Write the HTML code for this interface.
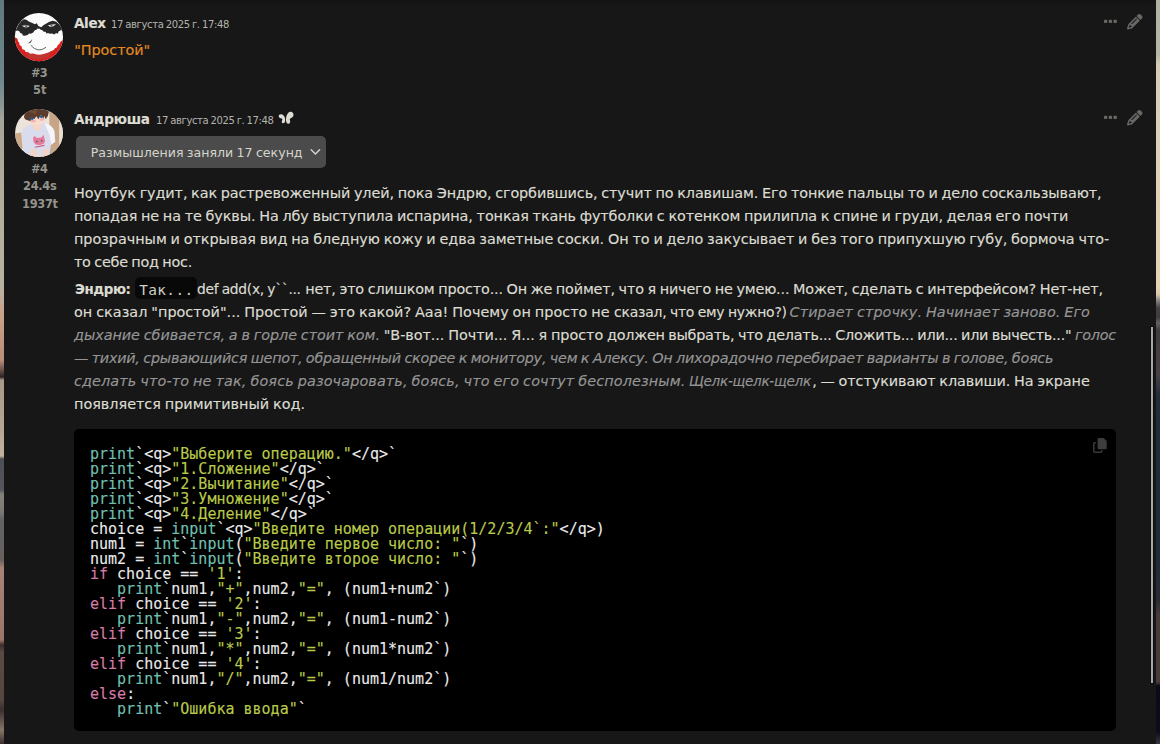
<!DOCTYPE html>
<html lang="ru">
<head>
<meta charset="utf-8">
<title>Chat</title>
<style>
html,body{margin:0;padding:0;}
body{width:1160px;height:744px;overflow:hidden;position:relative;background:#171717;font-family:"DejaVu Sans","Liberation Sans",sans-serif;color:#dcdcd2;}
#bgl{position:absolute;left:0;top:0;width:4px;height:744px;background:linear-gradient(#5f797e 0px,#6f888b 80px,#8a9794 105px,#a5a598 120px,#b0ac9c 186px,#b8b2a2 290px,#c9a48c 310px,#b98e7a 360px,#5a4640 372px,#2a2422 377px,#a89a88 380px,#b5a794 430px,#c0b29e 456px,#4c4e56 459px,#55565c 490px,#85807a 494px,#7c7873 512px,#626266 520px,#66605c 560px,#a88376 568px,#9a7568 640px,#3a2c28 645px,#5a4a44 652px,#55463f 700px,#3a3030 710px,#857565 730px,#3a3030 744px);}
#bgr{position:absolute;left:1156px;top:0;width:4px;height:744px;background:linear-gradient(#aeb3a6 0px,#b4b7a8 55px,#d6cbb5 65px,#dccfb8 120px,#e6d3b5 288px,#d8c4a8 295px,#8c8684 300px,#454044 308px,#3f3a3e 317px,#666164 323px,#413c41 330px,#4a4046 375px,#222c3a 395px,#1f2a3a 555px,#2a2c35 600px,#4a3a3a 615px,#4a3a3a 682px,#0a0a18 686px,#0c0c1c 732px,#3a3540 744px);}
#panel{position:absolute;left:4px;top:0;width:1152px;height:744px;background:#171717;}
#topshade{position:absolute;left:4px;top:0;width:1152px;height:7px;background:linear-gradient(#131313,#171717);}
#sb{position:absolute;left:1151px;top:327px;width:2px;height:356px;background:#a9a9a9;box-shadow:0 0 0 1px #0c0c0c;}
.t{position:absolute;white-space:pre;word-spacing:-0.7px;line-height:23px;font-size:14.4px;height:23px;-webkit-text-stroke:0.15px;}
.t i{color:#959595;font-style:italic;}
.nm{font-weight:bold;font-size:14.6px;}
.b{font-weight:bold;font-size:14.4px;}
.ts{font-size:10.8px;color:#b4b4ae;-webkit-text-stroke:0;}
.q{color:#e18a24;}
.sx{font-weight:bold;font-size:12.7px;color:#94948c;-webkit-text-stroke:0;}
.rs{color:#d4d4cc;font-size:12.6px;-webkit-text-stroke:0;}
#rbox{position:absolute;left:76px;top:136px;width:250px;height:32px;border-radius:5px;background:#4b4b4b;}
#icode{position:absolute;left:135.2px;top:277.2px;width:61.4px;height:21.4px;border-radius:5px;background:#080808;}
#icodet{position:absolute;left:139.3px;top:279px;font-family:"DejaVu Sans Mono","Liberation Mono",monospace;font-size:14.4px;letter-spacing:0.36px;line-height:23px;white-space:nowrap;color:#cfcfc6;}
#cb{position:absolute;left:74px;top:429px;width:1042px;height:302px;border-radius:5px;background:#000;}
#cb pre{position:absolute;left:16px;top:18px;-webkit-text-stroke:0.12px;margin:0;font-family:"DejaVu Sans Mono","Liberation Mono",monospace;font-size:15px;line-height:15px;color:#eaeaea;white-space:pre;}
.k{color:#d77ba8;}
.bi{color:#70c0b1;}
.s{color:#b9ca4a;}
svg{position:absolute;overflow:visible;}
</style>
</head>
<body>
<div id="bgl"></div><div id="bgr"></div>
<div id="panel"></div><div id="topshade"></div><div id="sb"></div>
<div id="rbox"></div>
<div id="icode"></div><div id="icodet">Так...</div>
<!-- avatar 1 -->
<svg style="left:9px;top:6px" width="60" height="60" viewBox="0 0 744 744">
<defs><clipPath id="c1"><circle cx="371" cy="385" r="299"/></clipPath></defs>
<circle cx="371" cy="385" r="303" fill="#0e0e0e"/>
<g clip-path="url(#c1)">
<rect x="60" y="70" width="640" height="640" fill="#fbfbfb"/>
<path d="M60 385 L78 392 L105 405 L112 440 L128 455 L130 485 L155 500 L165 535 L195 545 L205 570 L240 575 L260 592 L300 590 L340 600 L380 605 L420 598 L450 590 L490 578 L520 560 L555 545 L570 525 L595 510 L605 485 L625 470 L635 445 L655 430 L700 405 L700 720 L60 720Z" fill="#d8201f"/>
<path d="M200 585 L280 598 L370 612 L450 598 L540 555 L480 640 L360 665 L250 640Z" fill="#b5403a" opacity=".75"/>
<path d="M60 300 L92 285 L120 225 L150 190 L185 165 L215 172 L250 195 L290 210 L320 225 L345 215 L365 250 L345 290 L320 300 L300 330 L270 345 L250 340 L230 360 L195 370 L170 365 L165 345 L140 335 L125 310 L100 305 L60 320Z" fill="#272727"/>
<path d="M355 245 L400 262 L430 235 L470 215 L500 195 L545 182 L585 195 L620 225 L650 265 L700 290 L700 305 L640 300 L615 315 L605 345 L585 335 L560 352 L535 340 L510 345 L480 335 L465 345 L455 320 L430 318 L415 300 L395 295 L375 280 L350 285Z" fill="#272727"/>
<path d="M158 240 Q205 226 262 242 Q240 268 205 267 Q175 262 158 240Z" fill="#e4e4e4"/>
<path d="M480 240 Q520 220 585 224 Q560 256 520 260 Q495 256 480 240Z" fill="#e4e4e4"/>
<path d="M165 238 Q210 226 258 240" stroke="#272727" stroke-width="12" fill="none"/>
<path d="M485 234 Q530 216 580 221" stroke="#272727" stroke-width="12" fill="none"/>
<circle cx="212" cy="250" r="12" fill="#555"/><circle cx="528" cy="243" r="12" fill="#555"/>
<path d="M288 410 L264 440 L230 464 L272 452 Z" fill="#333"/>
<path d="M272 490 Q360 590 455 515" stroke="#2b2b2b" stroke-width="9" fill="none" stroke-linecap="round"/>
</g>
</svg>
<!-- avatar 2 -->
<svg style="left:9px;top:103px" width="60" height="60" viewBox="0 0 744 744">
<defs><clipPath id="c2"><circle cx="372" cy="372" r="297"/></clipPath></defs>
<circle cx="372" cy="372" r="302" fill="#0e0e0e"/>
<g clip-path="url(#c2)">
<rect x="60" y="60" width="640" height="640" fill="#ece3da"/>
<rect x="500" y="60" width="125" height="640" fill="#c8a685"/>
<rect x="625" y="60" width="80" height="640" fill="#e9ded2"/>
<path d="M60 380 L150 365 L170 560 L120 600 L60 560Z" fill="#c9a98a"/>
<path d="M160 340 Q200 280 300 260 L440 245 Q540 270 565 360 L575 480 L520 520 L500 640 L430 660 L240 670 L180 600 L165 480Z" fill="#d9dcec"/>
<path d="M440 250 Q520 262 560 340 L570 480 L525 515 L505 400Z" fill="#f4f4fa"/>
<path d="M250 600 L330 560 L360 680 L270 680Z" fill="#f3d3c6"/>
<path d="M420 560 L485 580 L470 670 L400 680Z" fill="#f3d3c6"/>
<path d="M255 170 Q250 260 330 290 Q420 290 440 200 L440 140 L260 140Z" fill="#f7dcd0"/>
<path d="M290 270 L400 270 L395 330 L340 345 L300 320Z" fill="#f4d6ca"/>
<ellipse cx="300" cy="225" rx="34" ry="16" fill="#f0a8a8" opacity=".8"/>
<ellipse cx="408" cy="205" rx="30" ry="15" fill="#f0a8a8" opacity=".8"/>
<path d="M185 175 Q190 95 290 75 Q400 50 495 105 Q490 160 455 200 L440 160 L425 195 L395 148 L365 200 L340 165 L312 202 L282 186 L262 226 L235 215 Q200 215 185 175Z" fill="#5b3b2b"/><path d="M240 110 Q300 85 350 100 L330 140 Z" fill="#7a5440" opacity=".7"/>
<ellipse cx="286" cy="196" rx="19" ry="17" fill="#2f7fd0"/><ellipse cx="400" cy="172" rx="19" ry="17" fill="#2f7fd0"/><ellipse cx="286" cy="190" rx="14" ry="8" fill="#1c3f78"/><ellipse cx="400" cy="166" rx="14" ry="8" fill="#1c3f78"/>
<path d="M300 425 L322 410 L345 435 L400 428 L430 395 L440 440 Q455 480 430 505 Q380 530 330 515 Q295 490 300 425Z" fill="#e8799c"/>
<circle cx="345" cy="478" r="11" fill="#3a6a78"/><circle cx="405" cy="466" r="11" fill="#3a6a78"/>
<path d="M320 548 L440 525" stroke="#d0607f" stroke-width="14"/>
</g>
</svg>
<!-- icons row 1 -->
<svg style="left:1103px;top:19px" width="15" height="5" viewBox="0 0 15 5"><rect x="0.900" y="0.700" width="3.400" height="3.400" rx="1.100" fill="#686864"/><rect x="5.700" y="0.700" width="3.400" height="3.400" rx="1.100" fill="#686864"/><rect x="10.500" y="0.700" width="3.400" height="3.400" rx="1.100" fill="#686864"/></svg>
<svg style="left:1126.700px;top:13.800px" width="15.500" height="15.500" viewBox="0 0 512 512"><path fill="#686864" d="M410.300 231l11.300-11.300-33.900-33.900-62.100-62.100L291.700 89.800l-11.300 11.300-22.600 22.600L58.600 322.900c-10.400 10.400-18 23.300-22.200 37.400L1 480.700c-2.500 8.400-.2 17.500 6.100 23.700s15.300 8.500 23.700 6.100l120.300-35.400c14.100-4.200 27-11.800 37.400-22.200L387.700 253.700 410.300 231zM160 399.400l-9.100 22.700c-4 3.100-8.500 5.400-13.300 6.900L59.400 452l23-78.100c1.400-4.900 3.800-9.400 6.900-13.300l22.700-9.100v32c0 8.800 7.200 16 16 16h32zM362.700 18.700L348.300 33.200 325.700 55.800 314.300 67.100l33.900 33.900 62.100 62.100 33.900 33.900 11.300-11.300 22.600-22.600 14.500-14.500c25-25 25-65.500 0-90.500L453.300 18.700c-25-25-65.500-25-90.500 0zm-47.400 168l-144 144c-6.200 6.200-16.400 6.200-22.600 0s-6.200-16.400 0-22.600l144-144c6.200-6.200 16.400-6.200 22.600 0s6.200 16.400 0 22.600z"/></svg>
<!-- icons row 2 -->
<svg style="left:1103px;top:115px" width="15" height="5" viewBox="0 0 15 5"><rect x="0.900" y="0.700" width="3.400" height="3.400" rx="1.100" fill="#686864"/><rect x="5.700" y="0.700" width="3.400" height="3.400" rx="1.100" fill="#686864"/><rect x="10.500" y="0.700" width="3.400" height="3.400" rx="1.100" fill="#686864"/></svg>
<svg style="left:1126.700px;top:109.800px" width="15.500" height="15.500" viewBox="0 0 512 512"><path fill="#686864" d="M410.300 231l11.300-11.300-33.900-33.900-62.100-62.100L291.700 89.800l-11.300 11.300-22.600 22.600L58.600 322.900c-10.400 10.400-18 23.300-22.200 37.400L1 480.700c-2.500 8.400-.2 17.500 6.100 23.700s15.300 8.500 23.700 6.100l120.300-35.400c14.100-4.200 27-11.800 37.400-22.200L387.700 253.700 410.300 231zM160 399.400l-9.100 22.700c-4 3.100-8.500 5.400-13.300 6.900L59.400 452l23-78.100c1.400-4.900 3.800-9.400 6.900-13.300l22.700-9.100v32c0 8.800 7.200 16 16 16h32zM362.700 18.700L348.300 33.200 325.700 55.800 314.300 67.100l33.900 33.900 62.100 62.100 33.900 33.900 11.300-11.300 22.600-22.600 14.500-14.500c25-25 25-65.500 0-90.500L453.300 18.700c-25-25-65.500-25-90.500 0zm-47.400 168l-144 144c-6.200 6.200-16.400 6.200-22.600 0s-6.200-16.400 0-22.600l144-144c6.200-6.200 16.400-6.200 22.600 0s6.200 16.400 0 22.600z"/></svg>
<!-- butterfly -->
<svg style="left:270px;top:105px" width="60" height="30" viewBox="0 0 1160 580"><path fill="#dcdcd2" d="M168 215 C168 185 200 170 237 184 C277 200 294 250 294 290 C294 332 276 357 250 354 C226 351 220 325 234 300 C246 276 236 262 210 258 C184 254 168 240 168 215Z"/><path fill="#dcdcd2" d="M311 310 C304 250 317 190 350 153 C380 122 432 126 450 165 C464 200 446 242 410 253 C385 261 375 276 386 300 C397 330 386 360 355 362 C327 362 314 340 311 310Z"/></svg>
<!-- chevron -->
<svg style="left:310px;top:148px" width="11" height="8" viewBox="0 0 11 8"><path d="M1.200 1.800 L5.400 6 L9.600 1.800" fill="none" stroke="#d4d4cc" stroke-width="1.500" stroke-linecap="round" stroke-linejoin="round"/></svg>

<div class="t sx" id="s1a" style="left:31.2px;top:60.6px;letter-spacing:-0.790px;transform:scaleX(0.9);transform-origin:0 50%">#3</div>
<div class="t sx" id="s1b" style="left:32.7px;top:78.1px;letter-spacing:-0.009px;transform:scaleX(0.9);transform-origin:0 50%">5t</div>
<div class="t sx" id="s2a" style="left:31px;top:156.7px;letter-spacing:-0.512px;transform:scaleX(0.9);transform-origin:0 50%">#4</div>
<div class="t sx" id="s2b" style="left:22.6px;top:174.2px;letter-spacing:-0.327px;transform:scaleX(0.9);transform-origin:0 50%">24.4s</div>
<div class="t sx" id="s2c" style="left:21.8px;top:192px;letter-spacing:-0.323px;transform:scaleX(0.9);transform-origin:0 50%">1937t</div>
<div class="t nm" id="m1name" style="left:74.2px;top:10.5px;letter-spacing:-0.408px;transform:scaleX(0.93);transform-origin:0 50%">Alex</div>
<div class="t ts" id="m1ts" style="left:110.9px;top:12.8px;letter-spacing:-0.390px;transform:scaleX(0.93);transform-origin:0 50%">17 августа 2025 г. 17:48</div>
<div class="t q" id="m1tx" style="left:74.3px;top:38.5px;letter-spacing:-0.084px">"Простой"</div>
<div class="t nm" id="m2name" style="left:74px;top:106.5px;letter-spacing:-0.236px;transform:scaleX(0.93);transform-origin:0 50%">Андрюша</div>
<div class="t ts" id="m2ts" style="left:155.7px;top:108.8px;letter-spacing:-0.408px;transform:scaleX(0.93);transform-origin:0 50%">17 августа 2025 г. 17:48</div>
<div class="t rs" id="rs" style="left:90.7px;top:140.5px;letter-spacing:0.002px">Размышления заняли 17 секунд</div>
<div class="t " id="p1a" style="left:74px;top:181.5px;letter-spacing:-0.105px">Ноутбук гудит, как растревоженный улей, пока Эндрю, сгорбившись, стучит по клавишам. Его тонкие пальцы то и дело соскальзывают,</div>
<div class="t " id="p1b" style="left:74px;top:204.5px;letter-spacing:-0.094px">попадая не на те буквы. На лбу выступила испарина, тонкая ткань футболки с котенком прилипла к спине и груди, делая его почти</div>
<div class="t " id="p1c" style="left:74px;top:227.5px;letter-spacing:-0.034px">прозрачным и открывая вид на бледную кожу и едва заметные соски. Он то и дело закусывает и без того припухшую губу, бормоча что-</div>
<div class="t " id="p1d" style="left:74px;top:250.5px;letter-spacing:-0.261px">то себе под нос.</div>
<div class="t b" id="p2n" style="left:74.5px;top:277.5px;letter-spacing:-0.400px;transform:scaleX(0.93);transform-origin:0 50%">Эндрю:</div>
<div class="t " id="p2a" style="left:197.1px;top:277.5px;letter-spacing:-0.307px;transform:scaleX(0.96);transform-origin:0 50%">def add(x, y``...</div>
<div class="t " id="p2a2" style="left:305.2px;top:277.5px;letter-spacing:-0.170px">нет, это слишком просто... Он же поймет, что я ничего не умею... Может, сделать с интерфейсом? Нет-нет,</div>
<div class="t " id="p2b" style="left:74px;top:300.5px;letter-spacing:0.025px">он сказал "простой"... Простой — это какой? Ааа! Почему он просто не </div>
<div class="t " id="p2b1" style="left:613.5px;top:300.5px;letter-spacing:-0.236px;transform:scaleX(0.97);transform-origin:0 50%">сказал, что ему нужно?)</div>
<div class="t " id="p2b2" style="left:789.6px;top:300.5px;letter-spacing:0.066px"><i>Стирает строчку. Начинает заново. Его</i></div>
<div class="t " id="p2c" style="left:74px;top:323.5px;letter-spacing:-0.051px"><i>дыхание сбивается, а в горле стоит ком.</i> "В-вот... Почти... Я... я просто </div>
<div class="t " id="p2c1" style="left:607px;top:323.5px;letter-spacing:-0.253px">должен выбрать, что делать... Сложить... или... или вычесть..." <i>голос</i></div>
<div class="t " id="p2d" style="left:74px;top:346.5px;letter-spacing:-0.264px"><i>— тихий, срывающийся шепот, обращенный скорее к монитору, чем к Алексу. Он лихорадочно перебирает варианты в голове, боясь</i></div>
<div class="t " id="p2e" style="left:74px;top:369.5px;letter-spacing:0.112px"><i>сделать что-то не так, боясь разочаровать, боясь, что его сочтут бесполезным. </i></div>
<div class="t " id="p2e1" style="left:689.4px;top:369.5px;letter-spacing:-0.278px;transform:scaleX(0.94);transform-origin:0 50%"><i>Щелк-щелк-щелк</i></div>
<div class="t " id="p2e2" style="left:812.2px;top:369.5px;letter-spacing:-0.081px">, — отстукивают клавиши. На экране</div>
<div class="t " id="p2f" style="left:74px;top:392.5px;letter-spacing:-0.009px">появляется примитивный код.</div>
<div id="cb"><pre><span class="bi">print</span>`&lt;q&gt;<span class="s">"Выберите операцию."</span>&lt;/q&gt;`
<span class="bi">print</span>`&lt;q&gt;<span class="s">"1.Сложение"</span>&lt;/q&gt;`
<span class="bi">print</span>`&lt;q&gt;<span class="s">"2.Вычитание"</span>&lt;/q&gt;`
<span class="bi">print</span>`&lt;q&gt;<span class="s">"3.Умножение"</span>&lt;/q&gt;`
<span class="bi">print</span>`&lt;q&gt;<span class="s">"4.Деление"</span>&lt;/q&gt;`
choice = <span class="bi">input</span>`&lt;q&gt;<span class="s">"Введите номер операции(1/2/3/4`:"</span>&lt;/q&gt;)
num1 = <span class="bi">int</span>`<span class="bi">input</span>(<span class="s">"Введите первое число: "</span>`)
num2 = <span class="bi">int</span>`<span class="bi">input</span>(<span class="s">"Введите второе число: "</span>`)
<span class="k">if</span> choice == <span class="s">'1'</span>:
   <span class="bi">print</span>`num1,<span class="s">"+"</span>,num2,<span class="s">"="</span>, (num1+num2`)
<span class="k">elif</span> choice == <span class="s">'2'</span>:
   <span class="bi">print</span>`num1,<span class="s">"-"</span>,num2,<span class="s">"="</span>, (num1-num2`)
<span class="k">elif</span> choice == <span class="s">'3'</span>:
   <span class="bi">print</span>`num1,<span class="s">"*"</span>,num2,<span class="s">"="</span>, (num1*num2`)
<span class="k">elif</span> choice == <span class="s">'4'</span>:
   <span class="bi">print</span>`num1,<span class="s">"/"</span>,num2,<span class="s">"="</span>, (num1/num2`)
<span class="k">else</span>:
   <span class="bi">print</span>`<span class="s">"Ошибка ввода"</span>`</pre>
<svg style="left:1019.3px;top:8.900px" width="14" height="15.500" viewBox="0 0 14 15.500"><path d="M5.600 0h5l3.100 3.100v7.200a1 1 0 0 1-1 1h-7.100a1 1 0 0 1-1-1v-9.300a1 1 0 0 1 1-1z" fill="#3d3d3d"/><path d="M3.200 4.800H1.800a1 1 0 0 0-1 1v7.500a1 1 0 0 0 1 1h6a1 1 0 0 0 1-1V12.300" fill="none" stroke="#383838" stroke-width="1.600"/></svg>
</div>

</body>
</html>
